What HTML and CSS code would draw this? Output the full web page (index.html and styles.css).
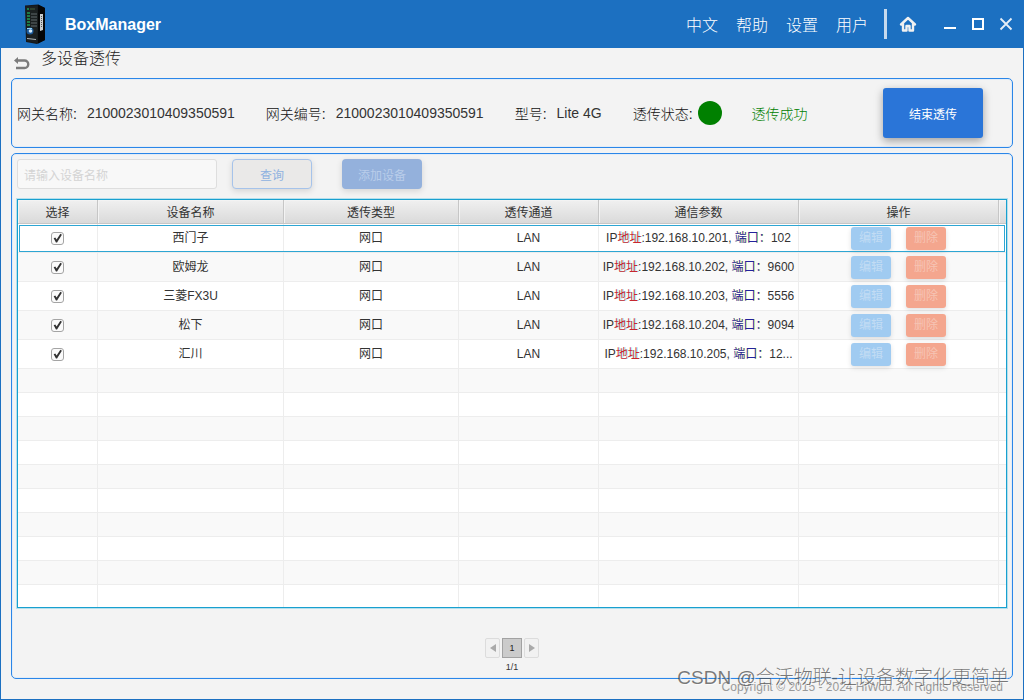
FILE: index.html
```
<!DOCTYPE html>
<html lang="zh-CN">
<head>
<meta charset="utf-8">
<title>BoxManager</title>
<link rel="stylesheet" href="styles.css">
</head>
<body>
<div class="window">
  <header class="titlebar">
    <svg class="logo" viewBox="0 0 22 40" aria-hidden="true">
      <path d="M1 1.500 14 .5 21 4v32l-8 4L2 38z" fill="#15181a"/>
      <path d="M14 .5 21 4v32l-7 3.600z" fill="#050607"/>
      <path d="M2 2.500 13.500 2v37L3 37z" fill="#1b2021"/>
      <path d="M6 4h5v2H6z" fill="#2f3f2d"/>
      <path d="M3 5h2M3 9h3M3 12h3M3 15h3M3 18h3M3 21h3" stroke="#1f9a55" stroke-width="1.500"/>
      <path d="M7 10h6M7 13h6M7 16h6M7 19h6M7 22h6" stroke="#3d4446" stroke-width="2"/>
      <path d="M16 10h3v16l-3 1z" fill="#c9ced0"/>
      <path d="M17.500 12v12" stroke="#555" stroke-dasharray="1 1"/>
      <circle cx="6" cy="27" r="3.500" fill="#1c5a9a"/>
      <circle cx="6.500" cy="27" r="1.800" fill="#d6ecfa"/>
      <path d="M3 24.500h5" stroke="#8fd0f5"/>
      <path d="M3 34.500l9 1" stroke="#aeb4b6"/>
    </svg>
    <h1 class="brand">BoxManager</h1>
    <nav class="menu">
      <a href="#">中文</a>
      <a href="#">帮助</a>
      <a href="#">设置</a>
      <a href="#">用户</a>
    </nav>
    <span class="divider"></span>
    <div class="window-buttons">
      <button type="button" class="home" aria-label="主页"><svg width="18" height="18" viewBox="0 0 18 18"><path d="M2 9.500 9 3l7 6.500M4 8.500V15.500h3.500V11h3v4.500H14V8.500" fill="none" stroke="#f1f1f1" stroke-width="2.400" stroke-linejoin="round" stroke-linecap="round"/></svg></button>
      <button type="button" aria-label="最小化"><svg width="14" height="14" viewBox="0 0 14 14"><path d="M1 11h12" stroke="#fff" stroke-width="2"/></svg></button>
      <button type="button" aria-label="最大化"><svg width="14" height="14" viewBox="0 0 14 14"><path d="M2 2h10v10H2z" fill="none" stroke="#fff" stroke-width="2"/></svg></button>
      <button type="button" aria-label="关闭"><svg width="14" height="14" viewBox="0 0 14 14"><path d="M1.500 1.500l11 11M12.500 1.500l-11 11" stroke="#e6eef7" stroke-width="1.800"/></svg></button>
    </div>
  </header>

  <div class="page-title">
    <button type="button" class="back" aria-label="返回"><svg width="17" height="16" viewBox="0 0 17 16"><path d="M3 5.500h8.500a3.500 3.500 0 0 1 0 7.500H3" fill="none" stroke="#7b7b7b" stroke-width="2.400"/><path d="M1 5.500 5 2v7z" fill="#7b7b7b"/></svg></button>
    <h2>多设备透传</h2>
  </div>

  <main>
    <section class="panel gateway">
      <dl class="info">
        <div class="pair"><dt>网关名称:</dt><dd>2100023010409350591</dd></div>
        <div class="pair"><dt>网关编号:</dt><dd>2100023010409350591</dd></div>
        <div class="pair"><dt>型号:</dt><dd>Lite 4G</dd></div>
        <div class="pair state"><dt>透传状态:</dt><dd><span class="lamp"></span><span class="ok">透传成功</span></dd></div>
      </dl>
      <button type="button" class="stop">结束透传</button>
    </section>

    <section class="panel devices">
      <form class="tools">
        <input type="text" class="search" placeholder="请输入设备名称" aria-label="设备名称" disabled>
        <button type="button" class="query" disabled>查询</button>
        <button type="button" class="add" disabled>添加设备</button>
      </form>
      <div class="grid">
        <table>
          <colgroup><col class="c-pick"><col class="c-name"><col class="c-type"><col class="c-chan"><col class="c-wide"><col class="c-wide"><col></colgroup>
          <thead>
            <tr><th>选择</th><th>设备名称</th><th>透传类型</th><th>透传通道</th><th>通信参数</th><th>操作</th><th></th></tr>
          </thead>
          <tbody>
            <tr class="device selected"><td><input type="checkbox" aria-label="西门子" checked></td><td>西门子</td><td>网口</td><td>LAN</td><td>IP<span class="ip">地址</span>:192.168.10.201, <span class="port">端口：</span>102</td><td><button type="button" class="edit" disabled>编辑</button><button type="button" class="delete" disabled>删除</button></td><td></td></tr>
            <tr class="device"><td><input type="checkbox" aria-label="欧姆龙" checked></td><td>欧姆龙</td><td>网口</td><td>LAN</td><td>IP<span class="ip">地址</span>:192.168.10.202, <span class="port">端口：</span>9600</td><td><button type="button" class="edit" disabled>编辑</button><button type="button" class="delete" disabled>删除</button></td><td></td></tr>
            <tr class="device"><td><input type="checkbox" aria-label="三菱FX3U" checked></td><td>三菱FX3U</td><td>网口</td><td>LAN</td><td>IP<span class="ip">地址</span>:192.168.10.203, <span class="port">端口：</span>5556</td><td><button type="button" class="edit" disabled>编辑</button><button type="button" class="delete" disabled>删除</button></td><td></td></tr>
            <tr class="device"><td><input type="checkbox" aria-label="松下" checked></td><td>松下</td><td>网口</td><td>LAN</td><td>IP<span class="ip">地址</span>:192.168.10.204, <span class="port">端口：</span>9094</td><td><button type="button" class="edit" disabled>编辑</button><button type="button" class="delete" disabled>删除</button></td><td></td></tr>
            <tr class="device"><td><input type="checkbox" aria-label="汇川" checked></td><td>汇川</td><td>网口</td><td>LAN</td><td>IP<span class="ip">地址</span>:192.168.10.205, <span class="port">端口：</span>12...</td><td><button type="button" class="edit" disabled>编辑</button><button type="button" class="delete" disabled>删除</button></td><td></td></tr>
            <tr><td></td><td></td><td></td><td></td><td></td><td></td><td></td></tr>
            <tr><td></td><td></td><td></td><td></td><td></td><td></td><td></td></tr>
            <tr><td></td><td></td><td></td><td></td><td></td><td></td><td></td></tr>
            <tr><td></td><td></td><td></td><td></td><td></td><td></td><td></td></tr>
            <tr><td></td><td></td><td></td><td></td><td></td><td></td><td></td></tr>
            <tr><td></td><td></td><td></td><td></td><td></td><td></td><td></td></tr>
            <tr><td></td><td></td><td></td><td></td><td></td><td></td><td></td></tr>
            <tr><td></td><td></td><td></td><td></td><td></td><td></td><td></td></tr>
            <tr><td></td><td></td><td></td><td></td><td></td><td></td><td></td></tr>
            <tr><td></td><td></td><td></td><td></td><td></td><td></td><td></td></tr>
          </tbody>
        </table>
      </div>
      <nav class="pager" aria-label="分页">
        <div class="pages">
          <button type="button" class="step" aria-label="上一页" disabled><svg width="6" height="8" viewBox="0 0 6 8"><path d="M6 0v8L0 4z" fill="#a9a9a9"/></svg></button>
          <button type="button" class="current">1</button>
          <button type="button" class="step" aria-label="下一页" disabled><svg width="6" height="8" viewBox="0 0 6 8"><path d="M0 0v8l6-4z" fill="#a9a9a9"/></svg></button>
        </div>
        <span class="count">1/1</span>
      </nav>
    </section>
  </main>
  <footer class="copyright">Copyright © 2015 - 2024 HiWoo. All Rights Reserved</footer>
  <div class="watermark">CSDN @合沃物联-让设备数字化更简单</div>
</div>
</body>
</html>
```
FILE: styles.css
```
* { box-sizing: border-box; }

body {
  margin: 0;
  font-family: "Liberation Sans", "Noto Sans CJK SC", sans-serif;
  font-size: 12px;
  color: #333;
}

button, input { font: inherit; }
button { padding: 0; border: 0; background: none; }

.window {
  position: relative;
  display: flex;
  flex-direction: column;
  min-height: 100vh;
  border: 1px solid #1c70c1;
  border-top: 0;
  background: #f3f3f3;
}

/* Title bar */
.titlebar {
  display: flex;
  align-items: center;
  height: 48px;
  padding: 0 10px 0 23px;
  background: #1c70c1;
  color: #fff;
}
.logo { width: 22px; height: 40px; }
.brand { margin: 2px auto 0 19px; font-size: 16px; line-height: 24px; }
.menu { display: flex; gap: 18px; font-size: 16px; font-weight: 300; }
.menu a { color: #fff; text-decoration: none; }
.divider { width: 3px; height: 30px; margin: 0 12px 0 16px; background: #c6daee; }
.window-buttons { display: flex; align-items: center; gap: 14px; }
.window-buttons button, .window-buttons svg { display: block; }
.home { margin-right: 12px; }

/* Page heading */
.page-title { display: flex; align-items: center; gap: 11px; height: 30px; padding: 0 12px; }
.page-title h2 { margin: 0 0 8px; font-size: 16px; font-weight: 300; line-height: 22px; color: #222; }
.back svg { display: block; }

main { display: flex; flex: 1; flex-direction: column; gap: 5px; padding: 0 10px; }
.panel { border: 1px solid #2a86e8; border-radius: 5px; box-shadow: inset 0 0 0 1px #e2ecf7; }

/* Gateway summary */
.gateway { display: flex; align-items: center; justify-content: space-between; height: 70px; padding: 0 29px 0 5px; }
.info { display: flex; gap: 31px; margin: 0; font-size: 14px; }
.info dt, .ok { font-weight: 300; }
.info dt { color: #111; }
.pair { display: flex; align-items: center; gap: 10px; }
.pair dd { display: flex; align-items: center; margin: 0; }
.state { gap: 5px; }
.lamp { width: 24px; height: 24px; margin-right: 30px; border-radius: 50%; background: #008000; }
.ok { color: #008000; }
.stop {
  width: 100px;
  height: 50px;
  border-radius: 3px;
  background: #2a75d8;
  box-shadow: 0 3px 8px rgba(0, 0, 0, .35);
  color: #fff;
}

/* Device list */
.devices { flex: 1; padding: 5px; }
.tools { display: flex; align-items: center; margin-bottom: 10px; }
.tools button { width: 80px; height: 30px; border-radius: 4px; box-shadow: 0 2px 6px rgba(0, 0, 0, .13); }
.search { width: 200px; height: 30px; margin-right: 15px; padding: 3px 6px 0; border: 1px solid #dedede; border-radius: 3px; background: #f8f8f8; }
.search::placeholder { color: #d4d4d4; }
.query { margin-right: 30px; background: #eae9e8; color: #8fb2e0; }
.tools .query { border: 1px solid #a6c3ea; }
.add { background: #94b1dc; color: #b9cdea; }

.grid { border: 1px solid #18a0cf; box-shadow: 0 0 0 1px #b4dfed; }
table { width: 100%; table-layout: fixed; border-collapse: separate; border-spacing: 0; background: #fff; }
.c-pick { width: 80px; }
.c-name { width: 186px; }
.c-type { width: 175px; }
.c-chan { width: 140px; }
.c-wide { width: 200px; }
th, td { height: 24px; padding: 0; border-right: 1px solid #ededed; border-bottom: 1px solid #ededed; line-height: 16px; text-align: center; white-space: nowrap; }
th { padding-top: 3px; border-color: #c6c6c6; background: linear-gradient(#f0f0f0, #dadada); box-shadow: inset 1px 1px #f3f3f3; font-weight: 400; }
th:last-child, td:last-child { border-right: 0; }
tbody tr:nth-child(even) { background: #f9f9f9; }
tbody tr:last-child td { height: 22px; border-bottom: 0; }
.device td { height: 29px; }
.selected { outline: 1px solid #2ea6d3; outline-offset: -2px; }
.ip { color: #c62830; text-shadow: 1px 0 rgba(0, 235, 235, .45); }
.port { color: #23239c; text-shadow: 1px 0 rgba(255, 255, 0, .5); }

td input {
  display: block;
  width: 13px;
  height: 13px;
  margin: 0 auto;
  border: 1px solid #a4a4a4;
  border-radius: 3px;
  appearance: none;
  background: #fbfbfb;
}
td input:checked::before {
  content: "";
  display: block;
  width: 11px;
  height: 11px;
  background: #333;
  clip-path: polygon(15% 52%, 30% 46%, 42% 64%, 76% 12%, 90% 20%, 46% 92%, 36% 92%);
}
td button { width: 40px; height: 23px; border-radius: 3px; box-shadow: 0 2px 5px rgba(0, 0, 0, .12); vertical-align: middle; }
.edit { margin-right: 15px; background: #a0cbf1; color: #c2dcf4; }
.delete { background: #f4a68e; color: #f6c4b4; }

/* Pager */
.pager { display: flex; flex-direction: column; align-items: center; gap: 3px; padding-top: 30px; font-size: 9px; }
.pages { display: flex; gap: 2px; }
.pages button { height: 20px; }
.step { display: flex; align-items: center; justify-content: center; width: 15px; border-radius: 2px; background: #f1f1f1; }
.pages .step { border: 1px solid #dcdcdc; }
.current { width: 20px; background: #cbcbcb; color: #222; }
.pages .current { border: 1px solid #a2a2a2; }
.count { line-height: 12px; }

.copyright { height: 20px; padding-right: 20px; color: #999; font-size: 12px; line-height: 16px; text-align: right; }
.watermark { position: absolute; right: 14px; bottom: 7px; color: rgba(80, 80, 80, .75); font-size: 19px; font-weight: 300; line-height: 28px; white-space: nowrap; text-shadow: 1px 1px rgba(255, 255, 255, .7); }
```
